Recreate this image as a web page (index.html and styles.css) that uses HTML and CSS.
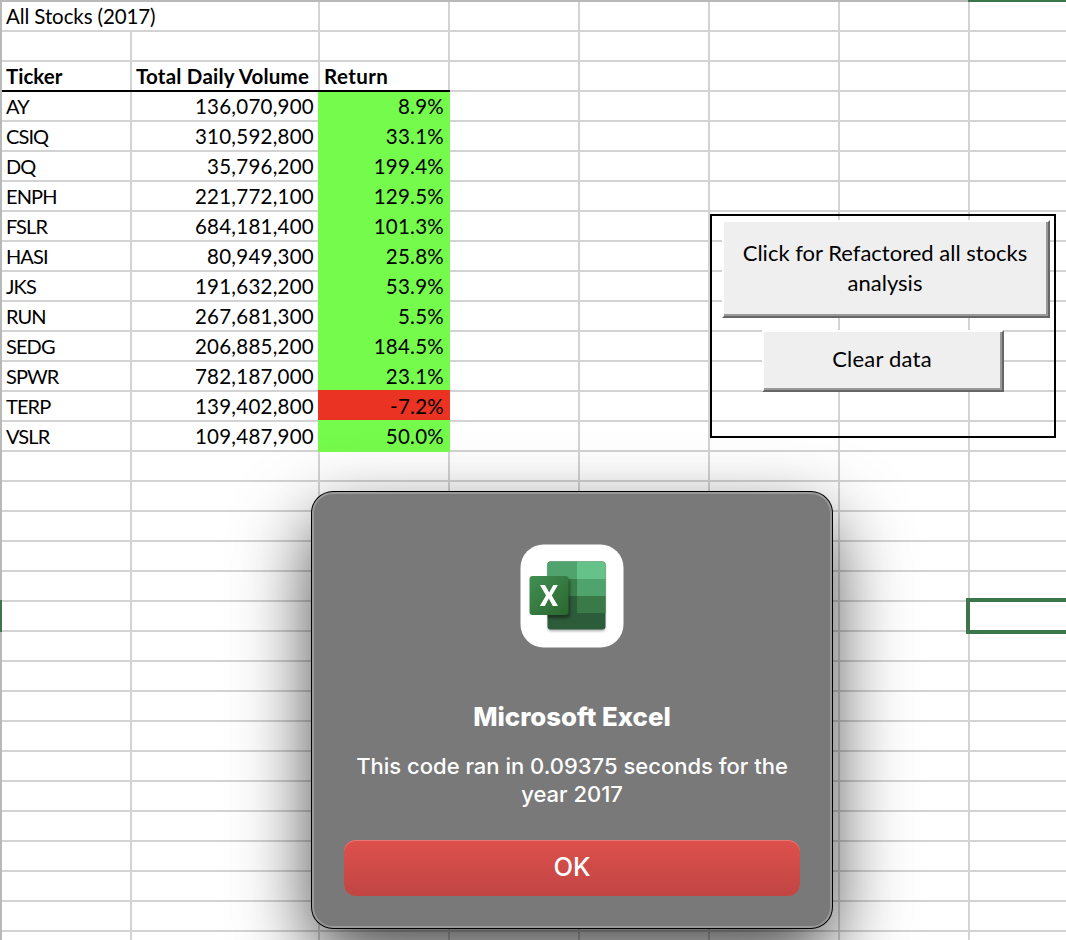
FILE: index.html
```html
<!DOCTYPE html>
<html lang="en">
<head>
<meta charset="utf-8">
<title>All Stocks (2017)</title>
<link rel="stylesheet" href="styles.css">
</head>
<body>
<main class="sheet">
  <div class="edge"></div>
  <div class="cells">
    <div class="title"><span class="t-title">All Stocks (2017)</span></div>
    <div class="blank"></div>
    <div class="head h-ticker">Ticker</div><div class="head h-volume">Total Daily Volume</div><div class="head h-return">Return</div>
    <div class="name">AY</div><div class="num">136,070,900</div><div class="num up">8.9%</div>
    <div class="name">CSIQ</div><div class="num">310,592,800</div><div class="num up">33.1%</div>
    <div class="name">DQ</div><div class="num">35,796,200</div><div class="num up">199.4%</div>
    <div class="name">ENPH</div><div class="num">221,772,100</div><div class="num up">129.5%</div>
    <div class="name">FSLR</div><div class="num">684,181,400</div><div class="num up">101.3%</div>
    <div class="name">HASI</div><div class="num">80,949,300</div><div class="num up">25.8%</div>
    <div class="name">JKS</div><div class="num">191,632,200</div><div class="num up">53.9%</div>
    <div class="name">RUN</div><div class="num">267,681,300</div><div class="num up">5.5%</div>
    <div class="name">SEDG</div><div class="num">206,885,200</div><div class="num up">184.5%</div>
    <div class="name">SPWR</div><div class="num">782,187,000</div><div class="num up">23.1%</div>
    <div class="name">TERP</div><div class="num">139,402,800</div><div class="num down">-7.2%</div>
    <div class="name">VSLR</div><div class="num">109,487,900</div><div class="num up">50.0%</div>
  </div>
  <div class="col-mark"></div>
  <div class="row-mark"></div>
  <div class="selection"></div>

  <section class="panel">
    <button class="sheet-btn run">Click for Refactored all stocks<br>analysis</button>
    <button class="sheet-btn clear">Clear data</button>
  </section>

  <section class="dialog" role="dialog">
    <svg class="app-icon" width="104" height="104" viewBox="0 0 104 104">
      <defs>
        <linearGradient id="tile" x1="0" y1="0" x2="1" y2="1">
          <stop offset="0" stop-color="#418f53"/><stop offset="1" stop-color="#2b672f"/>
        </linearGradient>
        <clipPath id="book"><rect x="27.5" y="17.5" width="58" height="68" rx="3"/></clipPath>
        <filter id="soft" x="-30%" y="-30%" width="160%" height="160%"><feGaussianBlur stdDeviation="1.5"/></filter>
      </defs>
      <rect x=".5" y=".5" width="103" height="103" rx="23" fill="#fff"/>
      <rect x="28" y="19" width="57" height="68" rx="3" fill="#000" opacity=".35" filter="url(#soft)"/>
      <g clip-path="url(#book)">
        <rect x="27" y="17" width="59" height="69" fill="#2d5c3a"/>
        <rect x="27" y="17" width="30" height="18" fill="#50a36d"/>
        <rect x="57" y="17" width="29" height="18" fill="#65c38a"/>
        <rect x="27" y="35" width="30" height="17" fill="#3a7f4b"/>
        <rect x="57" y="35" width="29" height="17" fill="#50a36d"/>
        <rect x="57" y="52" width="29" height="17" fill="#3a7a49"/>
        <rect x="12" y="35" width="38" height="39" rx="3" fill="#000" opacity=".4" filter="url(#soft)"/>
      </g>
      <rect x="9.5" y="32" width="39" height="39" rx="3" fill="url(#tile)"/>
      <path d="M20 41H25L29.2 48.4L33.3 41H37.9L31.8 51.4L38 62H32.8L28.8 54.6L24.8 62H19.8L26 51.4Z" fill="#fff"/>
    </svg>
    <h1 class="d-title">Microsoft Excel</h1>
    <p class="d-text">This code ran in 0.09375 seconds for the<br>year 2017</p>
    <button class="ok">OK</button>
  </section>
</main>
</body>
</html>
```
FILE: styles.css
```css
* { box-sizing: border-box; }
body { margin: 0; }
button { font: inherit; color: inherit; border: 0; padding: 0; border-radius: 0; }

.sheet {
  position: relative;
  width: 1066px;
  height: 940px;
  overflow: hidden;
  padding: 2px 0 0 2px;
  background-color: #fff;
  background-image:
    linear-gradient(90deg, transparent 130px, #d3d3d3 130px 132px, transparent 132px 318px, #d3d3d3 318px 320px, transparent 320px),
    repeating-linear-gradient(90deg, #d3d3d3 0 2px, transparent 2px 130px),
    repeating-linear-gradient(180deg, #d3d3d3 0 2px, transparent 2px 30px);
  background-position: 0 0, 448px 0, 0 0;
  background-repeat: no-repeat;
  font-family: Lato, "Liberation Sans", sans-serif;
  font-size: 20.5px;
  color: #000;
}
.edge {
  position: absolute;
  inset: 0;
  border-top: 2px solid #b9b9b9;
  border-left: 2px solid #b9b9b9;
}

.cells {
  display: grid;
  grid-template-columns: 130px 188px 130px;
  grid-auto-rows: 30px;
  width: 448px;
  line-height: 28px;
  white-space: nowrap;
}
.title { grid-column: 1 / 3; padding-left: 4px; }
.t-title { display: block; width: 180px; height: 28px; background: #fff; letter-spacing: -.1px; }
.blank { grid-column: 1 / 4; }
.head { padding-left: 4px; font-weight: 700; border-bottom: 2px solid #000; }
.h-volume { letter-spacing: .22px; }
.h-return { letter-spacing: .4px; }
.name { padding-left: 4px; font-size: 20px; letter-spacing: -.9px; }
.num { padding-right: 6px; text-align: right; letter-spacing: .25px; }
.up { background: #75fb4c; box-shadow: -2px 0 #75fb4c; }
.down { background: #ea3323; box-shadow: -2px 0 #ea3323; height: 30px; margin-top: -2px; padding-top: 2px; }
.down + .name + .num + .up { margin-top: -2px; padding-top: 2px; }

.col-mark { position: absolute; left: 968px; top: 0; width: 98px; height: 2px; background: #3b7549; }
.row-mark { position: absolute; left: 0; top: 600px; width: 2px; height: 32px; background: #3b7549; }
.selection { position: absolute; left: 966px; top: 598px; width: 104px; height: 36px; border: 4px solid #3b7549; background: #fff; }

.panel {
  position: absolute;
  left: 710px;
  top: 214px;
  width: 346px;
  height: 224px;
  border: 2px solid #000;
  padding: 4px 0 0 10px;
  display: flex;
  flex-direction: column;
  align-items: flex-start;
  gap: 12px;
}
.sheet-btn {
  background: #efefef;
  border: 2px solid #fff;
  border-right-color: #666;
  border-bottom-color: #666;
  box-shadow: inset -2px -2px #999;
  font-size: 22px;
  line-height: 30px;
}
.run { width: 328px; height: 98px; padding: 0 2px 2px 0; }
.clear { width: 242px; height: 62px; margin-left: 40px; padding: 0 2px 4px 0; letter-spacing: .2px; }

.dialog {
  position: absolute;
  left: 312px;
  top: 492px;
  width: 520px;
  height: 436px;
  border: 2px solid #999;
  border-radius: 21px;
  background: #797979;
  box-shadow: 0 0 0 1px #000, 0 30px 75px rgba(0, 0, 0, .72);
  padding: 50px 30px 0;
  display: flex;
  flex-direction: column;
  align-items: center;
  color: #fff;
  font-family: Inter, "Liberation Sans", sans-serif;
  text-align: center;
}
.app-icon { flex: none; }
.d-title { margin: 54px 0 0; font-size: 25.8px; line-height: 30px; font-weight: 800; white-space: nowrap; }
.d-text { margin: 20px 0 0; font-size: 22px; line-height: 28px; font-weight: 500; white-space: nowrap; }
.ok {
  width: 456px;
  height: 56px;
  margin-top: 32px;
  padding-bottom: 3px;
  flex: none;
  border-radius: 12px;
  background: linear-gradient(#de504c, #c04543);
  box-shadow: inset 0 1px #e87774;
  font-size: 25.5px;
  font-weight: 500;
}
```
